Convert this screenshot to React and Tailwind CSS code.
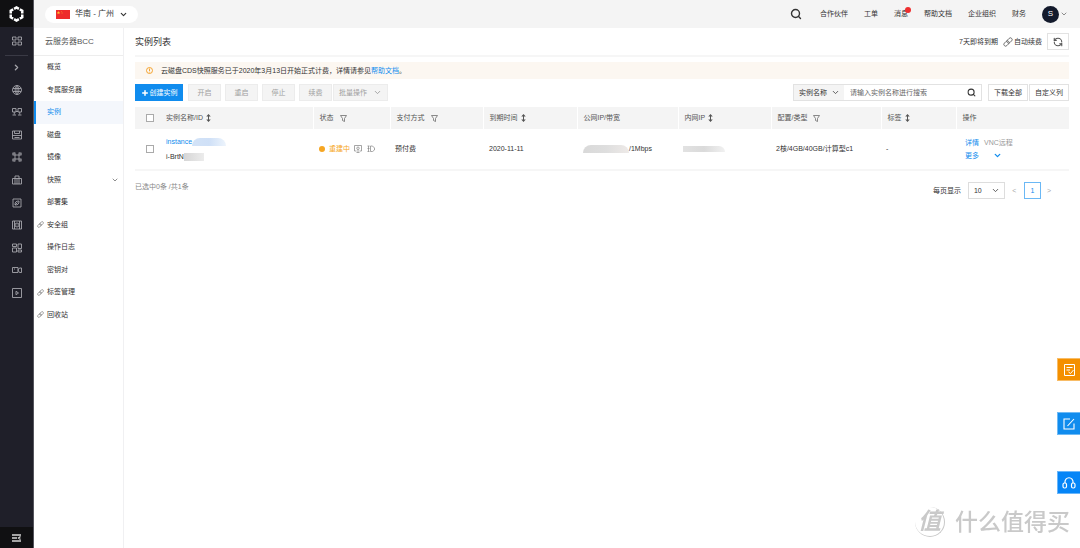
import React, { useState } from 'react';
import { ChevronDown, ChevronRight, Plus, RefreshCcw, Search } from 'lucide-react';

const topLinks = ['合作伙伴', '工单', '消息', '帮助文档', '企业组织', '财务'];

const menu = [
  { label: '概览' },
  { label: '专属服务器' },
  { label: '实例', active: true },
  { label: '磁盘' },
  { label: '镜像' },
  { label: '快照', expandable: true },
  { label: '部署集' },
  { label: '安全组', linked: true },
  { label: '操作日志' },
  { label: '密钥对' },
  { label: '标签管理', linked: true },
  { label: '回收站', linked: true },
];

const columns = [
  { label: '实例名称/ID', icon: 'sort' },
  { label: '状态', icon: 'filter' },
  { label: '支付方式', icon: 'filter' },
  { label: '到期时间', icon: 'sort' },
  { label: '公网IP/带宽' },
  { label: '内网IP', icon: 'sort' },
  { label: '配置/类型', icon: 'filter' },
  { label: '标签', icon: 'sort' },
  { label: '操作' },
];

// Product icons of the dark rail, drawn on a 20x20 grid
const railIcons = [
  { name: '网络', d: 'M10 1a9 9 0 1 0 0 18a9 9 0 1 0 0-18M10 1c-5 4-5 14 0 18M10 1c5 4 5 14 0 18M10 1v18M2 7h16M2 13h16' },
  { name: '云服务器', d: 'M1 3h7v7H1zM12 3h7v7h-7zM4.5 10v5M15.5 10v5M1 16h7M12 16h7M8 9h4' },
  { name: '磁盘', d: 'M1 2h18v16H1zM5 2v5h10V2M1 11h18M5 15h10' },
  { name: '负载均衡', d: 'M6 1v18M14 1v18M1 6h18M1 14h18M1 2h5M14 2h5M1 18h5M14 18h5M2 2v4M18 2v4M2 14v4M18 14v4' },
  { name: '专属服务', d: 'M1 7h18v11H1zM6 18V2h8v16M10 7v11' },
  { name: '数据库', d: 'M2 2h16v16H2zM6 14c0-6 2-8 8-8c0 6-2 8-8 8zM6 14l5-5' },
  { name: '对象存储', d: 'M1 2h18v16H1zM5 2v16M15 2v16M10 6a4 4 0 1 0 0 8a4 4 0 1 0 0-8M10 9v2' },
  { name: '应用', d: 'M1 2h8v5H1zM12 2h7v9h-7zM1 10h8v8H1zM12 14h7v4h-7z' },
  { name: '直播', d: 'M1 5h11v10H1zM12 10l3-4h4v9h-4zM4 8h2' },
  { name: '点播', d: 'M1 1h18v18H1zM8 6.5v7l5-3.5z' },
];

function LinkIcon({ className }) {
  return (
    <svg viewBox="0 0 20 20" className={className} fill="none" stroke="currentColor" strokeWidth="1.8">
      <rect x="7" y="3.5" width="12" height="7" rx="3.5" transform="rotate(-45 13 7)" />
      <rect x="1" y="9.5" width="12" height="7" rx="3.5" transform="rotate(-45 7 13)" />
    </svg>
  );
}

function SortIcon() {
  return (
    <svg viewBox="0 0 10 16" className="h-2 w-[5px]" fill="#555">
      <path d="M5 0l4.5 5H6v6h3.5L5 16L.5 11H4V5H.5z" />
    </svg>
  );
}

function FilterIcon() {
  return (
    <svg viewBox="0 0 14 14" className="ml-[3px] size-[7px]" fill="none" stroke="#666" strokeWidth="1.5">
      <path d="M1 1h12L9 7v6L5 11V7z" />
    </svg>
  );
}

function Rail() {
  return (
    <nav aria-label="产品" className="flex w-[34px] shrink-0 flex-col border-r border-[#55555d] bg-[#1f1f29] text-[#a5a5ab]">
      <a href="#home" aria-label="首页" className="flex h-[27px] items-center justify-center bg-[#101012]">
        <svg viewBox="0 0 30 32" className="h-4 w-[15px]" fill="none" stroke="#fff" strokeWidth="5">
          <path
            d="M15 3L26.500 9.500V22.500L15 29L3.500 22.500V9.500z"
            pathLength="60"
            strokeDasharray="8.4 1.6"
            strokeDashoffset="4.2"
          />
        </svg>
      </a>
      <a href="#all" aria-label="全部产品" className="mx-auto flex h-[29px] w-[23px] items-center justify-center border-b border-[#3a3a45]">
        <svg viewBox="0 0 20 20" className="size-2.5" fill="none" stroke="currentColor" strokeWidth="1.8">
          <path d="M1 2h7v6H1zM12 2h7v6h-7zM1 12h7v6H1zM12 12h7v6h-7z" />
        </svg>
      </a>
      <div className="grid h-[248px] grid-rows-11">
        <button type="button" aria-label="展开" className="flex items-center justify-center">
          <ChevronRight size={9} strokeWidth={3.5} />
        </button>
        {railIcons.map((icon) => (
          <a key={icon.name} href="#product" aria-label={icon.name} className="flex items-center justify-center">
            <svg viewBox="0 0 20 20" className="size-2.5" fill="none" stroke="currentColor" strokeWidth="1.8">
              <path d={icon.d} />
            </svg>
          </a>
        ))}
      </div>
      <button type="button" aria-label="收起菜单" className="mt-auto flex h-[21px] items-center justify-center bg-[#101012] text-[#d5d5d5]">
        <svg viewBox="0 0 18 16" className="h-2 w-[9px]" fill="none" stroke="currentColor" strokeWidth="2.6">
          <path d="M0 2h18M0 8h10M0 14h18M17 5l-4 3l4 3" />
        </svg>
      </button>
    </nav>
  );
}

function TopBar() {
  return (
    <header className="flex h-7 items-center justify-between bg-[#f4f4f4] pr-3 pl-[11px]">
      <div className="relative flex h-[17px] w-[93px] items-center rounded-full bg-white pl-[11px] text-[8px]">
        <svg viewBox="0 0 28 18" className="h-[9px] w-3.5">
          <path fill="#ee2b2b" d="M0 0h28v18H0z" />
          <path fill="#ffc62b" d="M5 2l1 2.500h2.500L6.500 6l.8 2.500L5 7L2.700 8.500L3.500 6L1.500 4.500H4zM10 2h1.200v1.200H10zM11.500 4h1.200v1.200h-1.200zM11.500 6.500h1.200v1.200h-1.200z" />
        </svg>
        <select aria-label="地域" className="ml-[5px] w-[60px] appearance-none outline-none">
          <option>华南 - 广州</option>
        </select>
        <ChevronDown size={9} strokeWidth={3} className="pointer-events-none absolute right-2.5" />
      </div>
      <div className="flex items-center gap-4">
        <button type="button" aria-label="搜索" className="mr-0.5">
          <Search size={12} strokeWidth={2.8} />
        </button>
        {topLinks.map((label) => (
          <a key={label} href="#top" className="relative">
            {label}
            {label === '消息' && <span className="absolute -top-0.5 -right-[3px] size-1.5 rounded-full bg-[#ee2f2f]" />}
          </a>
        ))}
        <button type="button" aria-label="账户" className="flex items-center gap-px">
          <span className="flex size-[17px] items-center justify-center rounded-full bg-[#131a2c] text-[8px] text-white">S</span>
          <ChevronDown size={8} strokeWidth={2.5} className="text-[#777]" />
        </button>
      </div>
    </header>
  );
}

function SideMenu() {
  return (
    <aside className="w-[90px] shrink-0 border-r border-[#f0f0f2]">
      <h2 className="flex h-7 items-center border-b border-[#ededed] pl-[11px] text-[8px] text-[#555]">云服务器BCC</h2>
      <ul className="grid h-[270px] grid-rows-12">
        {menu.map((item) => (
          <li key={item.label}>
            <a
              href="#menu"
              className={
                item.active
                  ? 'flex h-full items-center border-l-2 border-[#108cee] bg-[#f4f7fc] pl-[11px] text-[#108cee]'
                  : 'flex h-full items-center pl-[3px]'
              }
            >
              {!item.active && (
                <span className="w-2.5 text-[#777]">{item.linked && <LinkIcon className="size-[7px]" />}</span>
              )}
              {item.label}
              {item.expandable && <ChevronDown size={8} strokeWidth={2.5} className="mr-1 ml-auto text-[#777]" />}
            </a>
          </li>
        ))}
      </ul>
    </aside>
  );
}

function Toolbar() {
  const [keyword, setKeyword] = useState('');
  const disabled = 'h-[17px] w-[33px] border border-[#ececec] bg-[#f4f4f4] text-[#a0a0a0]';

  return (
    <div className="mt-[5px] flex justify-between">
      <div className="flex gap-1">
        <button type="button" className="mr-px flex h-[17px] w-12 items-center justify-center gap-px bg-[#108cee] text-white">
          <Plus size={8} strokeWidth={4.5} />
          创建实例
        </button>
        <button type="button" disabled className={disabled}>开启</button>
        <button type="button" disabled className={disabled}>重启</button>
        <button type="button" disabled className={disabled}>停止</button>
        <div className="flex gap-px">
          <button type="button" disabled className={disabled}>续费</button>
          <button type="button" disabled className="flex h-[17px] w-[55px] items-center justify-between border border-[#ececec] bg-[#f4f4f4] px-[5px] text-[#a0a0a0]">
            批量操作
            <ChevronDown size={9} strokeWidth={2.5} />
          </button>
        </div>
      </div>
      <div className="flex gap-px">
        <div className="mr-[5px] flex h-[17px] w-[189px] items-center border border-[#e2e2e2]">
          <div className="relative flex h-full w-[50px] items-center bg-[#f4f4f4]">
            <select aria-label="搜索字段" className="w-full appearance-none pl-[5px] outline-none">
              <option>实例名称</option>
            </select>
            <ChevronDown size={9} strokeWidth={2.5} className="pointer-events-none absolute right-1 text-[#555]" />
          </div>
          <input
            aria-label="搜索实例"
            placeholder="请输入实例名称进行搜索"
            value={keyword}
            onChange={(e) => setKeyword(e.target.value)}
            className="h-full min-w-0 flex-1 pl-1.5 outline-none placeholder:text-[#666]"
          />
          <button type="button" aria-label="搜索" className="mr-[5px]">
            <Search size={9} strokeWidth={2.8} />
          </button>
        </div>
        <button type="button" className="h-[17px] w-10 border border-[#e2e2e2]">下载全部</button>
        <button type="button" className="h-[17px] w-10 border border-[#e2e2e2]">自定义列</button>
      </div>
    </div>
  );
}

function InstanceTable() {
  return (
    <table className="mt-1.5 w-full table-fixed border-b-2 border-[#f6f6f6] text-left">
      <colgroup>
        <col className="w-[25px]" />
        <col className="w-[153px]" />
        <col className="w-[77px]" />
        <col className="w-[93px]" />
        <col className="w-[94px]" />
        <col className="w-[101px]" />
        <col className="w-[93px]" />
        <col className="w-[110px]" />
        <col className="w-[75px]" />
        <col className="w-[113px]" />
      </colgroup>
      <thead className="bg-[#f4f4f4] text-[#555]">
        <tr className="h-[22px]">
          <th className="pl-[11px]">
            <input type="checkbox" aria-label="全选" className="block size-2 appearance-none border border-[#aaa] bg-white" />
          </th>
          {columns.map((col) => (
            <th key={col.label} className="border-r border-white pl-1.5 font-normal last:border-r-0">
              <span className="flex items-center gap-[3px]">
                {col.label}
                {col.icon === 'sort' && <SortIcon />}
                {col.icon === 'filter' && <FilterIcon />}
              </span>
            </th>
          ))}
        </tr>
      </thead>
      <tbody>
        <tr className="h-[41px]">
          <td className="pl-[11px]">
            <input type="checkbox" aria-label="选择实例" className="block size-2 appearance-none border border-[#aaa]" />
          </td>
          <td className="pl-1.5">
            <div className="flex h-[15px] items-center">
              <a href="#instance" className="text-[#108cee]">instance</a>
              <span className="h-2 w-[34px] rounded-t-lg bg-linear-to-r from-[#d3e3f7] via-[#cfe0f7] to-[#edf4fc]" />
            </div>
            <div className="flex h-[15px] items-center">
              i-BrtN
              <span className="h-2 w-5 bg-linear-to-r from-[#d6d6d6] to-[#ececec]" />
            </div>
          </td>
          <td className="pl-1.5">
            <span className="flex items-center text-[#f6a623]">
              <span className="mr-1 size-1.5 rounded-full bg-[#f6a623]" />
              重建中
              <svg viewBox="0 0 16 16" className="ml-1 size-2" fill="none" stroke="#888" strokeWidth="1.5">
                <path d="M5 12H1V1h14v11h-4M8 4a2.500 2.500 0 1 0 0 5a2.500 2.500 0 1 0 0-5M8 9v5M5 15h6" />
              </svg>
              <svg viewBox="0 0 16 16" className="ml-[5px] size-2" fill="none" stroke="#888" strokeWidth="1.5">
                <path d="M1 2h4M1 7h4M1 13h4M3 2v11M7 2h4l4 4v4l-4 3H7z" />
              </svg>
            </span>
          </td>
          <td className="pl-[5px]">预付费</td>
          <td className="pl-1.5">2020-11-11</td>
          <td className="pl-1.5">
            <span className="flex items-center">
              <span className="h-2 w-[46px] rounded-t-lg bg-linear-to-r from-[#d9d9d9] via-[#dedede] to-[#eeeae8]" />
              /1Mbps
            </span>
          </td>
          <td className="pl-[5px]">
            <span className="block h-1.5 w-[42px] rounded-tr-md bg-linear-to-r from-[#e2e2e2] via-[#dadada] to-[#f1f1f1]" />
          </td>
          <td className="pl-[5px]">2核/4GB/40GB/计算型c1</td>
          <td className="pl-[5px]">-</td>
          <td className="pl-[9px]">
            <div className="flex h-[13px] items-center gap-[5px]">
              <a href="#detail" className="text-[#108cee]">详情</a>
              <span className="text-[#999]">VNC远程</span>
            </div>
            <button type="button" className="flex h-[13px] w-[37px] items-center justify-between text-[#108cee]">
              更多
              <ChevronDown size={9} strokeWidth={3.5} />
            </button>
          </td>
        </tr>
      </tbody>
    </table>
  );
}

function FloatingTools() {
  const base = 'flex size-[23px] items-center justify-center border-y border-l border-white/40 text-white';
  return (
    <div className="fixed right-0 bottom-[54px] flex flex-col">
      <button type="button" aria-label="问卷" className={`${base} bg-[#f49000]`}>
        <svg viewBox="0 0 22 24" className="h-3 w-[11px]" fill="none" stroke="currentColor" strokeWidth="2">
          <path d="M1 1h20v22H1zM5 7h12M5 12h7M9 16l4 3l6-7" />
        </svg>
      </button>
      <button type="button" aria-label="反馈" className={`${base} mt-[31px] bg-[#108cee]`}>
        <svg viewBox="0 0 24 24" className="size-3" fill="none" stroke="currentColor" strokeWidth="2.2">
          <path d="M14 2H2v20h20V11M9 16L22 2" />
        </svg>
      </button>
      <button type="button" aria-label="客服" className={`${base} mt-9 bg-[#0585f7]`}>
        <svg viewBox="0 0 28 24" className="h-3 w-3.5" fill="none" stroke="currentColor" strokeWidth="2.4">
          <path d="M6 12C4 -2 24 -2 22 12" />
          <rect x="2" y="12" width="7" height="10" rx="3" />
          <rect x="19" y="12" width="7" height="10" rx="3" />
        </svg>
      </button>
    </div>
  );
}

function Watermark() {
  return (
    <div className="pointer-events-none fixed right-2.5 bottom-2 flex items-center gap-2.5 text-[#c9c9c9]">
      <span className="flex size-[30px] items-center justify-center rounded-full border-r border-b border-[#c9c9c9] text-[23px] leading-none font-bold italic">值</span>
      <span className="text-[23px] leading-9 font-medium">什么值得买</span>
    </div>
  );
}

export default function App() {
  return (
    <div className="flex min-h-screen bg-white font-['Liberation_Sans','Noto_Sans_CJK_SC',sans-serif] text-[7px] leading-[10px] text-[#333]">
      <Rail />
      <div className="flex min-w-0 flex-1 flex-col">
        <TopBar />
        <div className="flex flex-1">
          <SideMenu />
          <main className="min-w-0 flex-1 px-[11px]">
            <div className="flex h-[29px] items-center justify-between border-b-2 border-[#f6f6f6]">
              <h1 className="text-[9px]">实例列表</h1>
              <div className="flex items-center">
                <a href="#expire">7天即将到期</a>
                <a href="#renew" className="ml-[5px] flex items-center gap-px">
                  <LinkIcon className="size-2.5 text-[#666]" />
                  自动续费
                </a>
                <button type="button" aria-label="刷新" className="ml-[5px] flex h-[17px] w-[22px] items-center justify-center border border-[#e2e2e2]">
                  <RefreshCcw size={10} strokeWidth={2.6} className="text-[#555]" />
                </button>
              </div>
            </div>
            <div className="mt-[5px] flex h-[17px] items-center bg-[#fcf7f1] pl-[11px]">
              <svg viewBox="0 0 14 14" className="mr-2 size-[7px]" fill="none" stroke="#f39a1d" strokeWidth="1.8">
                <circle cx="7" cy="7" r="6" />
                <path d="M7 3v5M7 9.500v1.500" />
              </svg>
              <p>
                云磁盘CDS快照服务已于2020年3月13日开始正式计费，详情请参见
                <a href="#docs" className="text-[#108cee]">帮助文档</a>。
              </p>
            </div>
            <Toolbar />
            <InstanceTable />
            <div className="flex items-start justify-between pt-[11px]">
              <p className="text-[#888]">已选中0条 /共1条</p>
              <div className="flex items-center pr-[18px]">
                <label htmlFor="page-size">每页显示</label>
                <div className="relative ml-[7px] flex h-[17px] w-[37px] items-center border border-[#ddd]">
                  <select id="page-size" className="w-full appearance-none pl-[5px] outline-none">
                    <option>10</option>
                    <option>20</option>
                    <option>50</option>
                  </select>
                  <ChevronDown size={9} strokeWidth={2.5} className="pointer-events-none absolute right-1 text-[#555]" />
                </div>
                <button type="button" aria-label="上一页" className="w-[19px] text-[#aaa]">&lt;</button>
                <button type="button" aria-current="page" className="size-[17px] border border-[#6bb8f5] text-[#108cee]">1</button>
                <button type="button" aria-label="下一页" className="ml-1.5 text-[#aaa]">&gt;</button>
              </div>
            </div>
          </main>
        </div>
      </div>
      <FloatingTools />
      <Watermark />
    </div>
  );
}
